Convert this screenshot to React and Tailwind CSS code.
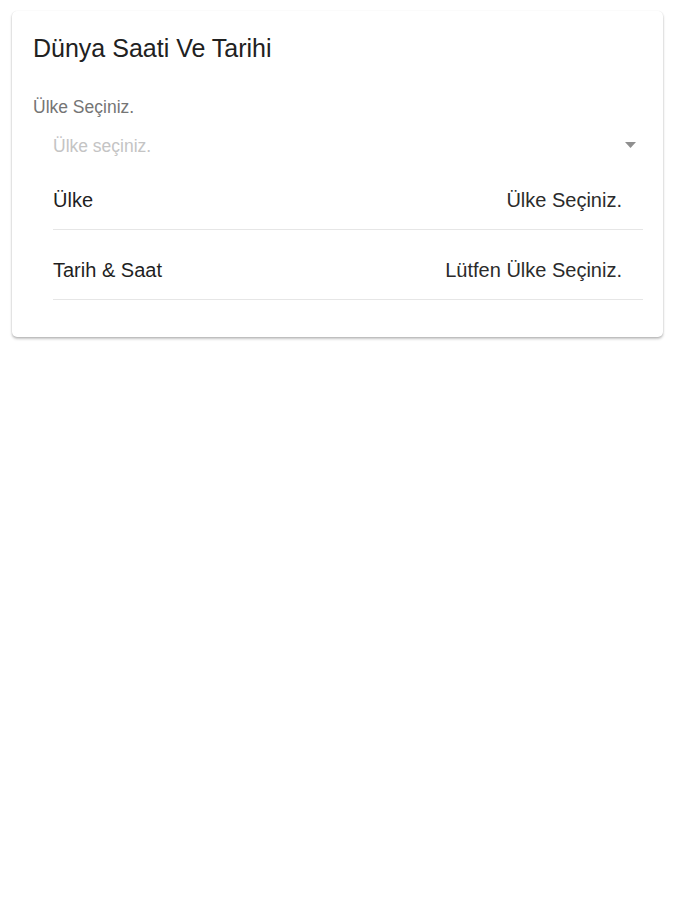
import React from 'react';

export default function App() {
    const rows = [
        { label: 'Ülke', value: 'Ülke Seçiniz.' },
        { label: 'Tarih & Saat', value: 'Lütfen Ülke Seçiniz.' },
    ];

    return (
        <div className="min-h-[900px] w-full bg-white pt-[11px] px-[12px] font-['Liberation_Sans',_Arial,_sans-serif]">
            <div className="w-[651px] rounded-[5px] bg-white shadow-[0_2px_3px_rgba(0,0,0,0.2),0_1px_2px_rgba(0,0,0,0.12),0_0_1px_rgba(0,0,0,0.08)] pb-[37px]">
                {/* Title */}
                <div className="h-[74px] flex items-center pl-[21px]">
                    <h1 className="text-[25px] leading-none text-[#212121]">Dünya Saati Ve Tarihi</h1>
                </div>

                {/* Select */}
                <div className="h-[42px] flex items-center pl-[21px] pt-[3px]">
                    <span className="text-[17.5px] leading-none text-[#757575]">Ülke Seçiniz.</span>
                </div>
                <div className="h-[38px] ml-[21px] mr-[20px] flex items-center justify-between pl-[20px] pr-[7px] pt-[2px]">
                    <span className="text-[17.5px] leading-none text-[#c4c4c4]">Ülke seçiniz.</span>
                    <svg width="11" height="6" viewBox="0 0 11 6" className="mb-[4px]">
                        <path d="M0 0 L11 0 L5.5 6 Z" fill="#8f8f8f" />
                    </svg>
                </div>

                {/* Info rows */}
                <div className="ml-[41px] mr-[20px] mt-[5px]">
                    {rows.map((r, i) => (
                        <div key={r.label} className={`h-[60px] flex items-center justify-between pr-[21px] border-b border-[#e6e6e6] ${i > 0 ? 'mt-[10px]' : ''}`}>
                            <span className="text-[20px] leading-none text-[#1f1f1f]">{r.label}</span>
                            <span className="text-[20px] leading-none text-[#2b2b2b]">{r.value}</span>
                        </div>
                    ))}
                </div>
            </div>
        </div>
    );
}
